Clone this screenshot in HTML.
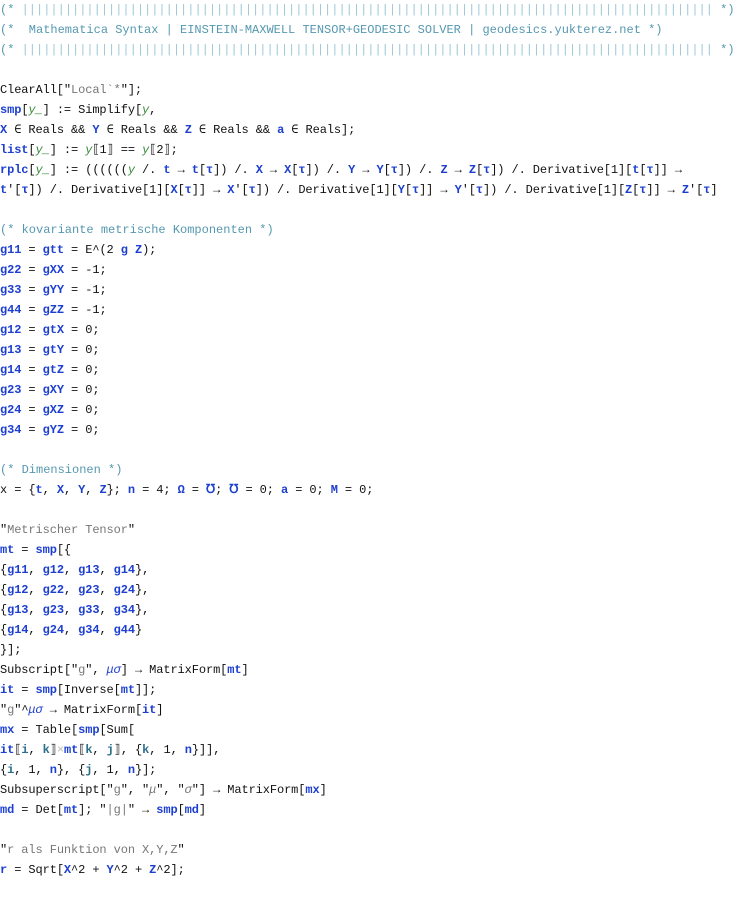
<!DOCTYPE html>
<html><head><meta charset="utf-8"><style>
body{margin:0;background:#fff;width:734px;height:897px;overflow:hidden}
pre{margin:0;font-family:"Liberation Mono","DejaVu Sans Mono",monospace;font-size:12px;line-height:20px;color:#111;white-space:pre;letter-spacing:-0.1px}
.c{color:#5598b0;letter-spacing:0}
.k{color:#9cc8d8}
.b{color:#1c3fd0;font-weight:bold}
.g{color:#3c8c3c;font-style:italic}
.s{color:#777}
.t{color:#2a6f8a;font-weight:bold}
.x{color:#bbb}
</style></head><body><pre><span class="c">(* <span class="k">||||||||||||||||||||||||||||||||||||||||||||||||||||||||||||||||||||||||||||||||||||||||||||||||</span> *)</span>
<span class="c">(*  Mathematica Syntax | EINSTEIN-MAXWELL TENSOR+GEODESIC SOLVER | geodesics.yukterez.net *)</span>
<span class="c">(* <span class="k">||||||||||||||||||||||||||||||||||||||||||||||||||||||||||||||||||||||||||||||||||||||||||||||||</span> *)</span>

ClearAll["<span class="s">Local`*</span>"];
<span class="b">smp</span>[<span class="g">y_</span>] := Simplify[<span class="g">y</span>,
<span class="b">X</span> ∈ Reals &amp;&amp; <span class="b">Y</span> ∈ Reals &amp;&amp; <span class="b">Z</span> ∈ Reals &amp;&amp; <span class="b">a</span> ∈ Reals];
<span class="b">list</span>[<span class="g">y_</span>] := <span class="g">y</span>⟦1⟧ == <span class="g">y</span>⟦2⟧;
<span class="b">rplc</span>[<span class="g">y_</span>] := ((((((<span class="g">y</span> /. <span class="b">t</span> → <span class="b">t</span>[<span class="b">τ</span>]) /. <span class="b">X</span> → <span class="b">X</span>[<span class="b">τ</span>]) /. <span class="b">Y</span> → <span class="b">Y</span>[<span class="b">τ</span>]) /. <span class="b">Z</span> → <span class="b">Z</span>[<span class="b">τ</span>]) /. Derivative[1][<span class="b">t</span>[<span class="b">τ</span>]] →
<span class="b">t</span>'[<span class="b">τ</span>]) /. Derivative[1][<span class="b">X</span>[<span class="b">τ</span>]] → <span class="b">X</span>'[<span class="b">τ</span>]) /. Derivative[1][<span class="b">Y</span>[<span class="b">τ</span>]] → <span class="b">Y</span>'[<span class="b">τ</span>]) /. Derivative[1][<span class="b">Z</span>[<span class="b">τ</span>]] → <span class="b">Z</span>'[<span class="b">τ</span>]

<span class="c">(* kovariante metrische Komponenten *)</span>
<span class="b">g11</span> = <span class="b">gtt</span> = E^(2 <span class="b">g</span> <span class="b">Z</span>);
<span class="b">g22</span> = <span class="b">gXX</span> = -1;
<span class="b">g33</span> = <span class="b">gYY</span> = -1;
<span class="b">g44</span> = <span class="b">gZZ</span> = -1;
<span class="b">g12</span> = <span class="b">gtX</span> = 0;
<span class="b">g13</span> = <span class="b">gtY</span> = 0;
<span class="b">g14</span> = <span class="b">gtZ</span> = 0;
<span class="b">g23</span> = <span class="b">gXY</span> = 0;
<span class="b">g24</span> = <span class="b">gXZ</span> = 0;
<span class="b">g34</span> = <span class="b">gYZ</span> = 0;

<span class="c">(* Dimensionen *)</span>
x = {<span class="b">t</span>, <span class="b">X</span>, <span class="b">Y</span>, <span class="b">Z</span>}; <span class="b">n</span> = 4; <span class="b">Ω</span> = <span class="b">℧</span>; <span class="b">℧</span> = 0; <span class="b">a</span> = 0; <span class="b">M</span> = 0;

"<span class="s">Metrischer Tensor</span>"
<span class="b">mt</span> = <span class="b">smp</span>[{
{<span class="b">g11</span>, <span class="b">g12</span>, <span class="b">g13</span>, <span class="b">g14</span>},
{<span class="b">g12</span>, <span class="b">g22</span>, <span class="b">g23</span>, <span class="b">g24</span>},
{<span class="b">g13</span>, <span class="b">g23</span>, <span class="b">g33</span>, <span class="b">g34</span>},
{<span class="b">g14</span>, <span class="b">g24</span>, <span class="b">g34</span>, <span class="b">g44</span>}
}];
Subscript["<span class="s">g</span>", <span class="g" style="color:#1c3fd0">μσ</span>] → MatrixForm[<span class="b">mt</span>]
<span class="b">it</span> = <span class="b">smp</span>[Inverse[<span class="b">mt</span>]];
"<span class="s">g</span>"^<span class="g" style="color:#1c3fd0">μσ</span> → MatrixForm[<span class="b">it</span>]
<span class="b">mx</span> = Table[<span class="b">smp</span>[Sum[
<span class="b">it</span>⟦<span class="t">i</span>, <span class="t">k</span>⟧<span class="x">×</span><span class="b">mt</span>⟦<span class="t">k</span>, <span class="t">j</span>⟧, {<span class="t">k</span>, 1, <span class="b">n</span>}]],
{<span class="t">i</span>, 1, <span class="b">n</span>}, {<span class="t">j</span>, 1, <span class="b">n</span>}];
Subsuperscript["<span class="s">g</span>", "<span class="s"><i>μ</i></span>", "<span class="s"><i>σ</i></span>"] → MatrixForm[<span class="b">mx</span>]
<span class="b">md</span> = Det[<span class="b">mt</span>]; "<span class="s">|g|</span>" → <span class="b">smp</span>[<span class="b">md</span>]

"<span class="s">r als Funktion von X,Y,Z</span>"
<span class="b">r</span> = Sqrt[<span class="b">X</span>^2 + <span class="b">Y</span>^2 + <span class="b">Z</span>^2];
</pre></body></html>
